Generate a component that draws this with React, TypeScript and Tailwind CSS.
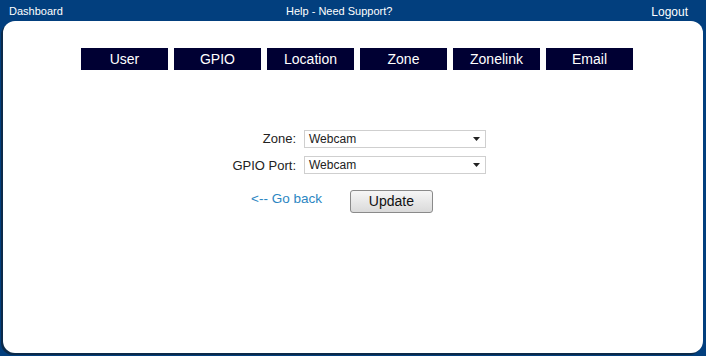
const TABS = ["User", "GPIO", "Location", "Zone", "Zonelink", "Email"];

function SelectBox({ value }: { value: string }) {
  return (
    <div className="flex h-[18px] w-[182px] items-center justify-between border border-[#cfcfcf] bg-white pl-[4px] pr-[5px] text-[12px] text-[#222]">
      <span>{value}</span>
      <svg width="7" height="4" viewBox="0 0 7 4">
        <path d="M0 0h7L3.5 4z" fill="#222" />
      </svg>
    </div>
  );
}

export default function App() {
  return (
    <div
      className="flex h-[356px] w-[706px] flex-col bg-[#023f7e] text-white"
      style={{ fontFamily: '"Liberation Sans", Arial, sans-serif' }}
    >
      {/* top bar */}
      <div className="flex h-[21px] items-center pl-[9px] pt-[2px] text-[11px]">
        <span className="w-[277px]">Dashboard</span>
        <span>Help - Need Support?</span>
        <span className="ml-auto mr-[18px] text-[12px]">Logout</span>
      </div>

      {/* main panel */}
      <div className="mx-[3px] mb-[3px] flex-1 rounded-[12px] bg-white pt-[27px] text-[#222] shadow-[-2px_2px_0_#0b2a4a]">
        <div className="flex gap-[6px] pl-[78px]">
          {TABS.map((t) => (
            <div
              key={t}
              className="flex h-[22px] w-[87px] items-center justify-center bg-[#000033] text-[14px] text-white"
            >
              {t}
            </div>
          ))}
        </div>

        <div className="mt-[59px] grid grid-cols-[290px_182px] items-center gap-x-[8px] gap-y-[7px] pl-[3px]">
          <span className="text-right text-[13px]">Zone:</span>
          <SelectBox value="Webcam" />
          <span className="text-right text-[13px]">GPIO Port:</span>
          <SelectBox value="Webcam" />
        </div>

        <div className="mt-[14px] flex items-center pl-[248px]">
          <a className="mb-[4px] text-[13.5px] text-[#2b86c2]">&lt;-- Go back</a>
          <button className="ml-[28px] h-[23px] w-[83px] rounded-[3px] border border-[#8a8a8a] bg-gradient-to-b from-[#f6f6f6] to-[#dadada] text-[14px] text-[#111]">
            Update
          </button>
        </div>
      </div>
    </div>
  );
}
